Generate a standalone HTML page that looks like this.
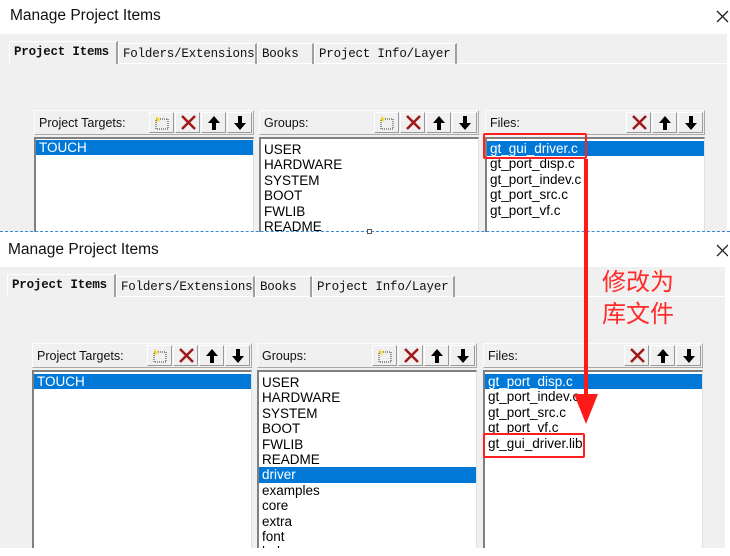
<!DOCTYPE html>
<html><head><meta charset="utf-8"><style>
*{margin:0;padding:0;box-sizing:border-box}
body{width:730px;height:556px;background:#fff;position:relative;overflow:hidden;font-family:"Liberation Sans",sans-serif}
.dlg{position:absolute;left:0;width:730px;overflow:hidden}
.title{position:absolute;left:10px;top:7px;font-size:15.5px;color:#111}
.close{position:absolute;left:716px;top:10px}
.gray{position:absolute;left:0;top:34px;width:727px;bottom:0;background:#f0f0f0}
.tab{position:absolute;height:21px;top:43px;font-family:"Liberation Mono",monospace;font-size:12.5px;color:#111;padding:3px 0 0 4px;border-right:2px solid #a0a0a0;border-top:1px solid #fff;border-left:1px solid #fff;white-space:nowrap;letter-spacing:-0.2px}
.tab.sel{top:41px;height:23px;padding-top:3px;background:#f0f0f0;font-weight:bold}
.tabline{position:absolute;left:9px;top:63px;width:718px;height:1px;background:#fff}
.hdr{position:absolute;height:25px;width:220px;border:1px solid #fcfcfc;border-right-color:#a9a9a9;border-bottom-color:#a9a9a9;background:#f0f0f0}
.hdr span{position:absolute;left:4px;top:5px;font-size:12.5px;color:#111}
.btn{position:absolute;top:1px;width:25px;height:21px;border:1px solid #fff;border-right-color:#999;border-bottom-color:#999}
.btn svg{position:absolute;left:4px;top:2px}
.list{position:absolute;width:220px;background:#fff;border-top:2px solid #808080;border-left:2px solid #808080;border-right:1px solid #e0e0e0}
.row{height:15.4px;line-height:15px;font-size:13.5px;padding-left:3px;color:#000;white-space:nowrap}
.row.hl{background:#0078d7;color:#fff}
.red{position:absolute;border:2px solid #ff2020;border-radius:2px}
.cn{position:absolute;left:602px;font-family:"Noto Sans CJK SC",sans-serif;font-size:24px;color:#ff2a2a;line-height:28px}
</style></head><body>

<!-- Dialog 1 -->
<div class="dlg" style="top:0;height:232px">
 <div class="title">Manage Project Items</div>
 <svg class="close" width="13" height="13"><path d="M1 1L12 12M12 1L1 12" stroke="#222" stroke-width="1.3"/></svg>
 <div class="gray"></div>
 <div class="tabline"></div>
 <div class="tab sel" style="left:9px;width:109px">Project Items</div>
 <div class="tab" style="left:118px;width:139px">Folders/Extensions</div>
 <div class="tab" style="left:257px;width:57px">Books</div>
 <div class="tab" style="left:314px;width:143px">Project Info/Layer</div>

 <div class="hdr" style="left:34px;top:110px"><span>Project Targets:</span>
  <div class="btn" style="left:114px"><svg width="17" height="16"><rect x="2" y="4" width="12" height="10" fill="none" stroke="#333" stroke-dasharray="1 1"/><path d="M3 1l1 2 2 0-1 2 1 2-2-1-2 1 1-2-1-2z" fill="#f5e020"/></svg></div>
  <div class="btn" style="left:140px"><svg width="17" height="16"><path d="M2 1L15 14M15 1L2 14" stroke="#a01818" stroke-width="2.5"/></svg></div>
  <div class="btn" style="left:166px"><svg width="17" height="16"><path d="M8 1L2 8h4v7h4V8h4z" fill="#000"/></svg></div>
  <div class="btn" style="left:192px"><svg width="17" height="16"><path d="M8 15L2 8h4V1h4v7h4z" fill="#000"/></svg></div>
 </div>
 <div class="list" style="left:34px;top:137px;height:100px;padding-top:1px"><div class="row hl">TOUCH</div></div>

 <div class="hdr" style="left:259px;top:110px"><span>Groups:</span>
  <div class="btn" style="left:114px"><svg width="17" height="16"><rect x="2" y="4" width="12" height="10" fill="none" stroke="#333" stroke-dasharray="1 1"/><path d="M3 1l1 2 2 0-1 2 1 2-2-1-2 1 1-2-1-2z" fill="#f5e020"/></svg></div>
  <div class="btn" style="left:140px"><svg width="17" height="16"><path d="M2 1L15 14M15 1L2 14" stroke="#a01818" stroke-width="2.5"/></svg></div>
  <div class="btn" style="left:166px"><svg width="17" height="16"><path d="M8 1L2 8h4v7h4V8h4z" fill="#000"/></svg></div>
  <div class="btn" style="left:192px"><svg width="17" height="16"><path d="M8 15L2 8h4V1h4v7h4z" fill="#000"/></svg></div>
 </div>
 <div class="list" style="left:259px;top:137px;height:100px;padding-top:3px">
  <div class="row">USER</div><div class="row">HARDWARE</div><div class="row">SYSTEM</div><div class="row">BOOT</div><div class="row">FWLIB</div><div class="row">README</div>
 </div>

 <div class="hdr" style="left:485px;top:110px"><span>Files:</span>
  <div class="btn" style="left:140px"><svg width="17" height="16"><path d="M2 1L15 14M15 1L2 14" stroke="#a01818" stroke-width="2.5"/></svg></div>
  <div class="btn" style="left:166px"><svg width="17" height="16"><path d="M8 1L2 8h4v7h4V8h4z" fill="#000"/></svg></div>
  <div class="btn" style="left:192px"><svg width="17" height="16"><path d="M8 15L2 8h4V1h4v7h4z" fill="#000"/></svg></div>
 </div>
 <div class="list" style="left:485px;top:137px;height:100px;padding-top:2px">
  <div class="row hl">gt_gui_driver.c</div><div class="row">gt_port_disp.c</div><div class="row">gt_port_indev.c</div><div class="row">gt_port_src.c</div><div class="row">gt_port_vf.c</div>
 </div>
</div>
<div style="position:absolute;left:0;top:231px;width:730px;border-top:1px dashed #3a86d8"></div>
<div style="position:absolute;left:367px;top:229px;width:5px;height:5px;border:1px solid #555;background:#fff"></div>

<!-- Dialog 2 -->
<div class="dlg" style="top:233px;height:315px;left:-2px">
 <div class="title" style="top:8px">Manage Project Items</div>
 <svg class="close" style="top:11px;left:718px" width="13" height="13"><path d="M1 1L12 12M12 1L1 12" stroke="#222" stroke-width="1.3"/></svg>
 <div class="gray"></div>
 <div class="tabline"></div>
 <div class="tab sel" style="left:9px;width:109px">Project Items</div>
 <div class="tab" style="left:118px;width:139px">Folders/Extensions</div>
 <div class="tab" style="left:257px;width:57px">Books</div>
 <div class="tab" style="left:314px;width:143px">Project Info/Layer</div>

 <div class="hdr" style="left:34px;top:110px"><span>Project Targets:</span>
  <div class="btn" style="left:114px"><svg width="17" height="16"><rect x="2" y="4" width="12" height="10" fill="none" stroke="#333" stroke-dasharray="1 1"/><path d="M3 1l1 2 2 0-1 2 1 2-2-1-2 1 1-2-1-2z" fill="#f5e020"/></svg></div>
  <div class="btn" style="left:140px"><svg width="17" height="16"><path d="M2 1L15 14M15 1L2 14" stroke="#a01818" stroke-width="2.5"/></svg></div>
  <div class="btn" style="left:166px"><svg width="17" height="16"><path d="M8 1L2 8h4v7h4V8h4z" fill="#000"/></svg></div>
  <div class="btn" style="left:192px"><svg width="17" height="16"><path d="M8 15L2 8h4V1h4v7h4z" fill="#000"/></svg></div>
 </div>
 <div class="list" style="left:34px;top:137px;height:190px;padding-top:2px"><div class="row hl">TOUCH</div></div>

 <div class="hdr" style="left:259px;top:110px"><span>Groups:</span>
  <div class="btn" style="left:114px"><svg width="17" height="16"><rect x="2" y="4" width="12" height="10" fill="none" stroke="#333" stroke-dasharray="1 1"/><path d="M3 1l1 2 2 0-1 2 1 2-2-1-2 1 1-2-1-2z" fill="#f5e020"/></svg></div>
  <div class="btn" style="left:140px"><svg width="17" height="16"><path d="M2 1L15 14M15 1L2 14" stroke="#a01818" stroke-width="2.5"/></svg></div>
  <div class="btn" style="left:166px"><svg width="17" height="16"><path d="M8 1L2 8h4v7h4V8h4z" fill="#000"/></svg></div>
  <div class="btn" style="left:192px"><svg width="17" height="16"><path d="M8 15L2 8h4V1h4v7h4z" fill="#000"/></svg></div>
 </div>
 <div class="list" style="left:259px;top:137px;height:190px;padding-top:3px">
  <div class="row">USER</div><div class="row">HARDWARE</div><div class="row">SYSTEM</div><div class="row">BOOT</div><div class="row">FWLIB</div><div class="row">README</div><div class="row hl">driver</div><div class="row">examples</div><div class="row">core</div><div class="row">extra</div><div class="row">font</div><div class="row">hal</div>
 </div>

 <div class="hdr" style="left:485px;top:110px"><span>Files:</span>
  <div class="btn" style="left:140px"><svg width="17" height="16"><path d="M2 1L15 14M15 1L2 14" stroke="#a01818" stroke-width="2.5"/></svg></div>
  <div class="btn" style="left:166px"><svg width="17" height="16"><path d="M8 1L2 8h4v7h4V8h4z" fill="#000"/></svg></div>
  <div class="btn" style="left:192px"><svg width="17" height="16"><path d="M8 15L2 8h4V1h4v7h4z" fill="#000"/></svg></div>
 </div>
 <div class="list" style="left:485px;top:137px;height:190px;padding-top:2px">
  <div class="row hl">gt_port_disp.c</div><div class="row">gt_port_indev.c</div><div class="row">gt_port_src.c</div><div class="row">gt_port_vf.c</div><div class="row">gt_gui_driver.lib</div>
 </div>
</div>

<!-- annotations -->
<div class="red" style="left:483px;top:133px;width:104px;height:26px"></div>
<div class="red" style="left:483px;top:433px;width:102px;height:25px"></div>
<svg style="position:absolute;left:570px;top:158px" width="32" height="270"><path d="M15 2L17 2 17 238 15 238Z" fill="#ff1a1a" stroke="#ff1a1a" stroke-width="2"/><path d="M4 236L28 236 16 266Z" fill="#ff1a1a"/></svg>
<div class="cn" style="top:266px">修改为</div>
<div class="cn" style="top:298px">库文件</div>
</body></html>
